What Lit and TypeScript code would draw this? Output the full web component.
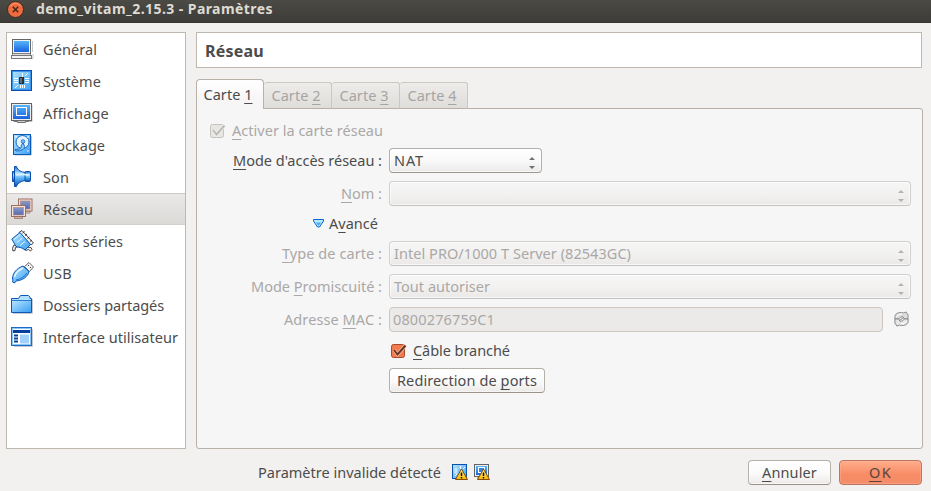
import { LitElement, html, css, svg, nothing } from "lit";
import { customElement, property, query } from "lit/decorators.js";

/** A label with an underlined mnemonic ("~" precedes the letter), tracked to a given width. */
@customElement("ui-text")
class UiText extends LitElement {
  @property() text = "";
  @property({ type: Number }) w = 0;
  @query("span") inner!: HTMLSpanElement;

  static styles = css`
    :host { display: inline-block; white-space: pre; flex: none; line-height: 20px; }
    u { text-decoration: underline; text-decoration-thickness: 1px; text-underline-offset: 3px; text-decoration-skip-ink: none; }
  `;

  updated() {
    const s = this.inner;
    s.style.letterSpacing = "0px";
    const n = this.text.replace("~", "").length;
    s.style.letterSpacing = `${(this.w - s.getBoundingClientRect().width) / n}px`;
  }

  render() {
    const i = this.text.indexOf("~");
    const t = this.text;
    if (i < 0) return html`<span>${t}</span>`;
    return html`<span>${t.slice(0, i) || nothing}<u>${t[i + 1]}</u>${t.slice(i + 2) || nothing}</span>`;
  }
}

const defs = svg`<defs>
  <linearGradient id="b" x1="0" y1="0" x2="0" y2="1"><stop offset="0" stop-color="#55b4fb"/><stop offset="1" stop-color="#1b63dd"/></linearGradient>
  <linearGradient id="l" x1="0" y1="0" x2="1" y2="1"><stop offset="0" stop-color="#b5e4ff"/><stop offset="1" stop-color="#3aa0f2"/></linearGradient>
  <linearGradient id="h" x1="0" y1="0" x2="0" y2="1"><stop offset="0" stop-color="#1a6fd0"/><stop offset=".35" stop-color="#b9e6ff"/><stop offset=".6" stop-color="#58b0f5"/><stop offset="1" stop-color="#0b4fae"/></linearGradient>
  <linearGradient id="n" x1="0" y1="0" x2="0" y2="1"><stop offset="0" stop-color="#8a9acb"/><stop offset="1" stop-color="#5468ac"/></linearGradient>
  <linearGradient id="y" x1="0" y1="0" x2="0" y2="1"><stop offset="0" stop-color="#fff2a0"/><stop offset="1" stop-color="#f5b800"/></linearGradient>
</defs>`;

const icons: Record<string, unknown> = {
  general: svg`
    <path d="M21.500 3v11M22 16v4.500H2" stroke="#c6c6c6" fill="none"/>
    <rect x="1.500" y="1.500" width="18" height="14" fill="#f1f1f1" stroke="#666"/>
    <rect x="3" y="3" width="15" height="11" fill="url(#b)"/>
    <path d="M2.500 15.500h16l2 2h-20z" fill="#dcdcdc" stroke="#777" stroke-width=".8"/>
    <rect x=".5" y="17.500" width="20" height="3" fill="#f4f4f4" stroke="#777"/>`,
  chip: svg`
    <rect x=".5" y=".5" width="20" height="20" fill="url(#l)" stroke="#0a50ae"/>
    <rect x="1.5" y="1.5" width="18" height="18" fill="none" stroke="#3c94e8"/>
    <path d="M11.500 3v4M3 8.500h4M3 10.500h4M3 12.500h4M14 8.500h4M14 10.500h4M14 12.500h4M9.500 15v3M11.500 15v3M13.500 15v3M4 18l3-3M14 6l3-3" stroke="#fff" fill="none"/>
    <rect x="8" y="7" width="5" height="7" fill="#2b3036"/><rect x="9" y="8" width="2" height="5" fill="#656b72"/>`,
  display: svg`
    <path d="M2 19.500h19V3" stroke="#c3c3c3" fill="none"/>
    <rect x=".5" y="1.500" width="20" height="17" fill="#eee" stroke="#626262"/>
    <rect x="2" y="3" width="17" height="14" fill="url(#b)"/>
    <rect x="5.500" y="5.500" width="10" height="8" fill="none" stroke="#fff"/>
    <path d="M3.500 18.500h14v1h-3v1h-8v-1h-3z" fill="#ccc" stroke="#666" stroke-width=".9"/>`,
  disk: svg`
    <path d="M20.500 2v19H4" stroke="#c3c8d0" fill="none"/>
    <rect x="2.500" y=".5" width="17" height="20" fill="url(#l)" stroke="#0c58bb"/>
    <circle cx="11.500" cy="8" r="6.500" fill="#e3f4ff" stroke="#1768c6"/>
    <path d="M12 8.500l1.500 4c0 3-3.500 4.500-8.500 4.500l-1-1.500c5 0 7-1.500 6-3.500z" fill="#8fcaf8" stroke="#1768c6"/>
    <circle cx="12" cy="7.500" r="1.800" fill="#7dbff5" stroke="#1768c6" stroke-width=".8"/>
    <circle cx="17" cy="17" r=".8" fill="#fff"/><path d="M16 3h2M4 3h2" stroke="#fff"/>`,
  sound: svg`
    <path d="M1.500 5.500h3v10h-3z" fill="url(#h)" stroke="#0b4fae"/>
    <path d="M3.500 .5h2c1 4 5 5.500 9 6v8c-4 .5-8 2.500-9 6h-2z" fill="url(#h)" stroke="#0b4fae"/>
    <rect x="14" y="5.500" width="5.500" height="10" rx="1" fill="url(#h)" stroke="#0b4fae"/>
    <path d="M5 9c4-.5 10-.5 13 0" stroke="#dbf3ff" fill="none" stroke-width="1.500"/>`,
  network: svg`
    <rect x="7.500" y="1" width="13.500" height="12" fill="#f4ded6" stroke="#9b6f61"/>
    <rect x="9.500" y="3" width="9.500" height="8" fill="url(#n)" stroke="#b08a80" stroke-width=".7"/>
    <path d="M13 13.500h6v1.500h-6z" fill="#eadad4" stroke="#9b6f61" stroke-width=".8"/>
    <rect x=".5" y="7.500" width="14" height="11" fill="#f6e2da" stroke="#9b6f61"/>
    <rect x="2.500" y="9.500" width="10" height="7.500" fill="url(#n)" stroke="#b08a80" stroke-width=".7"/>
    <path d="M3.500 19h8v1.500h-8z" fill="#f3e1da" stroke="#9b6f61" stroke-width=".8"/>`,
  serial: svg`
    <path d="M1.500 18.500l1-3 4-1 1 2-3 1-.5 3-2 .5zM13 19l2-2 5 .5 1 2-1.500 1.500-2-1.500-3 1z" fill="#eee" stroke="#333" stroke-width=".9"/>
    <path d="M8 2.500L11 .5 22.500 13l-2.500 2z" fill="#f4f4f4" stroke="#333" stroke-width=".9"/>
    <path d="M11.500 3l2-1.500M14 5.500l2-1.500M16.500 8.500l2-1.500M19 11.500l2-1.500" stroke="#333"/>
    <path d="M.8 9L9 2.500l10.500 12L14 20l-3-2-6-1.500z" fill="url(#l)" stroke="#0b55b5" stroke-linejoin="round"/>
    <path d="M3 9.500l6-5M6 12.500l5.500-4.500M9 15.500l5-4" fill="none" stroke="#dff4ff"/>`,
  usb: svg`
    <path d="M13.500 4.500l4.500-4L22.500 5l-4 4.500z" fill="#f4f4f4" stroke="#666"/>
    <path d="M17 3l1 1M19 5l1 1" stroke="#333"/>
    <path d="M1.500 17c0-6 4-10.500 10.500-13l6 5.500C17 15 11 18.500 5 19l-1.500 2-2-1 .5-2z" fill="url(#l)" stroke="#0b55b5"/>
    <path d="M3.500 15c1-4 4-7 8.500-9" stroke="#e4f6ff" fill="none" stroke-width="1.500"/>
    <path d="M5 18c5-1 9-4 11-7" stroke="#1d73d3" fill="none"/>`,
  folder: svg`
    <path d="M21.500 5v14.500H2" stroke="#c5cad2" fill="none"/>
    <path d="M.5 4.500h7l2-3h8l1.500 1.500v1.500h1.500v14H.5z" fill="#b2e0ff" stroke="#0d58b8"/>
    <rect x="1" y="7" width="19" height="11" fill="url(#l)"/>
    <path d="M1 6.500h19" stroke="#2878cf"/>`,
  window: svg`
    <path d="M21.500 3v17.500H3" stroke="#c5cad2" fill="none"/>
    <rect x=".5" y="1.500" width="20" height="18" fill="#fff" stroke="#1c69c8"/>
    <rect x="1.500" y="2.500" width="18" height="16" fill="none" stroke="#8dc4f6"/>
    <rect x="2" y="4" width="17" height="3" fill="#063f9b"/>
    <path d="M3 9.500h4M3 12.500h4M3 15.500h4" stroke="#063f9b" stroke-width="2"/>
    <rect x="9" y="8.500" width="9" height="9" fill="#a3cffc"/>`,
  chipSmall: svg`
    <rect x=".5" y=".5" width="14" height="14" fill="url(#l)" stroke="#0a50ae"/>
    <path d="M2.500 5h3M2.500 7h3M2.500 9h3M8.500 2v3M11 5l2-2M3 12l2-2" stroke="#fff"/>`,
  displaySmall: svg`
    <rect x=".5" y=".5" width="14" height="12" fill="#eee" stroke="#626262"/>
    <rect x="2" y="2" width="11" height="9" fill="url(#b)"/>
    <rect x="4.500" y="3.500" width="6" height="5" fill="#2d83e6" stroke="#fff"/>
    <path d="M3 14h7" stroke="#777"/>`,
};

const icon = (name: string) => html`<svg class="icon" viewBox="0 0 22 22">${defs}${icons[name]}</svg>`;
const warnIcon = (name: string) => html`<svg class="warn" viewBox="0 0 16 16">${defs}
  ${icons[name]}
  <path d="M9.500 5L15.500 15.500h-12z" fill="url(#y)" stroke="#8a4c00" stroke-linejoin="round"/>
  <path d="M9.500 8.500v3.500M9.500 13v1.500" stroke="#111" stroke-width="1.500"/></svg>`;

const arrows = html`<svg class="arrows" viewBox="0 0 6 12"><path d="M0 3h6L3 0zM0 9h6l-3 3z" fill="currentColor"/></svg>`;

const check = html`<svg class="tick" viewBox="0 0 17 16">
  <rect class="box" x="1.500" y="1.500" width="13" height="13" rx="2"/>
  <path class="halo" d="M4 7l3.500 4.500L15.500 2.500"/>
  <path class="mark" d="M4 7l3.500 4.500L15.500 2.500"/></svg>`;

const refresh = html`<svg class="refresh" viewBox="0 0 16 16">
  <path d="M1 8V4.500C2 2 4.500 1 8 1l2 .5 3-1 .5 1.500 1.500 1v5h-4L9.500 5.500 7 6 5 8z" fill="#dcdcdc" stroke="#8b8b8b"/>
  <path d="M15 8v3.500C14 14 11.500 15 8 15l-2-.5-3 1-.5-1.500L1 13V8h4l1.500 2.500L9 10l2-2z" fill="#e6e6e6" stroke="#828282"/>
  <path d="M2.500 6c1-2 3-3.500 6-3M13.500 10c-1 2-3 3.500-6 3" stroke="#fff" fill="none"/>
  <path d="M6 9.500l4-3" stroke="#777" fill="none"/></svg>`;

const t = (text: string, w: number) => html`<ui-text .text=${text} .w=${w}></ui-text>`;

const pages: [string, string, number][] = [
  ["general", "Général", 54], ["chip", "Système", 58], ["display", "Affichage", 66],
  ["disk", "Stockage", 62], ["sound", "Son", 26], ["network", "Réseau", 50],
  ["serial", "Ports séries", 80], ["usb", "USB", 29], ["folder", "Dossiers partagés", 121],
  ["window", "Interface utilisateur", 135],
];

@customElement("app-root")
class AppRoot extends LitElement {
  static styles = css`
    :host {
      display: flex; flex-direction: column; width: 931px; height: 491px; overflow: hidden;
      background: #f2f1f0; color: #4c4c4c; box-sizing: border-box;
      font: 14.5px/20px "Noto Sans", "Open Sans", sans-serif;
    }
    * { box-sizing: border-box; }
    svg { display: block; flex: none; overflow: visible; }
    .titlebar {
      height: 23px; flex: none; display: flex; align-items: center; padding: 0 0 4px 7px; gap: 12px;
      background: linear-gradient(#4b4a45, #3d3c38); border-bottom: 1px solid #37362f;
      color: #dfdbd2; font-weight: 700; font-size: 14px;
    }
    .close { width: 17px; height: 17px; }
    .body { display: flex; gap: 10px; padding: 9px 8px 0 6px; height: 426px; flex: none; }
    .sidebar { width: 180px; height: 417px; border: 1px solid #bfb8b1; background: #fff; }
    .item { height: 32px; display: flex; align-items: center; gap: 10px; padding-left: 4px; }
    .item.on { background: linear-gradient(#eae9e7, #dcdad7); border-top: 1px solid #cdcac6; border-bottom: 1px solid #d4d1cd; }
    .row ui-text, .btn ui-text { margin-bottom: 2px; }
    .icon { width: 22px; height: 22px; }
    .main { width: 727px; display: flex; flex-direction: column; }
    .heading {
      width: 726px; height: 36px; border: 1px solid #bfb8b1; background: #fff; padding: 1px 0 0 8px;
      display: flex; align-items: center; font-weight: 700; font-size: 16px; flex: none;
    }
    .tabs { display: flex; align-items: flex-end; height: 30px; margin: 11px 0 -1px; flex: none; z-index: 1; }
    .tab {
      width: 68px; height: 27px; border: 1px solid #cbc7c2; border-left: none; border-bottom-color: #b7b1aa;
      border-radius: 3px 3px 0 0; background: linear-gradient(#edecea, #dfddda);
      color: #a7a5a2; padding: 2px 0 0 7.5px;
    }
    .tab.on { height: 30px; border: 1px solid #b7b1aa; border-bottom: none; background: linear-gradient(#fff, #f6f6f6 70%); color: #4c4c4c; padding: 4px 0 0 6.5px; border-radius: 4px 4px 0 0; }
    .panel { flex: 1; background: #f6f6f6; border: 1px solid #b7b1aa; border-radius: 0 3px 3px 3px; padding-top: 9px; }
    .row { display: flex; align-items: center; gap: 7px; }
    .label { width: 185px; display: flex; justify-content: flex-end; align-items: center; flex: none; }
    .off { color: #aaa8a6; }
    .h26 { height: 26px; } .h28 { height: 28px; } .h30 { height: 30px; } .h32 { height: 32px; } .h34 { height: 34px; }
    .field {
      height: 25px; margin-bottom: 1px; border: 1px solid #b3afaa; border-bottom-color: #9b968f; border-radius: 4px;
      display: flex; align-items: center; justify-content: space-between; padding: 0 6px 0 4px;
      background: linear-gradient(#fff, #f9f9f9 50%, #eceae8); box-shadow: inset 0 0 0 1px #ffffffa0;
    }
    .field.empty { justify-content: flex-end; }
    .field.off { border-color: #d2cfcc; border-bottom-color: #c4c1be; background: linear-gradient(#f6f6f6, #f2f1f0 55%, #eae9e7); }
    .field.off .arrows { color: #b4b2b0; }
    .wide { width: 522px; }
    .nat { width: 153px; }
    .mac.off { width: 494px; background: #ebeae8; border-color: #cdc7c0; box-shadow: none; padding-left: 3px; }
    .arrows { width: 6px; height: 12px; position: relative; top: 2px; color: #72706e; }
    .refresh { width: 15px; height: 16px; margin: 0 0 3px 4px; }
    .tick { width: 17px; height: 16px; fill: none; stroke-width: 2; margin-bottom: 1px; }
    .box { fill: #f17a4e; stroke: #a9492c; stroke-width: 1; }
    .mark { stroke: #653524; }
    .halo { stroke: #ffbc9b; stroke-width: 3.500; }
    .off .box { fill: #e7e6e4; stroke: #c6c2bd; }
    .off .mark { stroke: #bcb9b6; }
    .off .halo { stroke: #f2f1f0; }
    .activate { padding-left: 12px; gap: 6px; }
    .advanced { padding-left: 116px; gap: 5px; }
    .cable { padding-left: 193px; gap: 6px; }
    .forward { padding-left: 192px; }
    .btn {
      height: 25px; display: flex; align-items: center; justify-content: center; border-radius: 4px;
      border: 1px solid #b5b0aa; border-bottom-color: #99938c; background: linear-gradient(#fff, #fafafa 55%, #eceae8);
      box-shadow: inset 0 0 0 1px #ffffff90;
    }
    .forward .btn { width: 156px; margin-bottom: 1px; }
    .footer { display: flex; align-items: center; padding: 4px 9px 0 258px; height: 42px; box-sizing: border-box; }
    .footer .btn ui-text { margin-bottom: 0; }
    .alerts { display: flex; gap: 6px; margin-left: 11px; }
    .warn { width: 16px; height: 16px; }
    .footer .btn { width: 83px; margin-left: 8px; }
    .footer .cancel { margin-left: auto; }
    .footer .ok { border-color: #ba765e; background: linear-gradient(#ffad8b, #f78b65 60%, #f38d69); box-shadow: inset 0 0 0 1px #ffc2a950; color: #5a443c; }
  `;

  combo(label: string, w: number, height: string, value: string, vw: number) {
    return html`<div class="row off ${height}">
      <div class="label">${t(label, w)}</div>
      <div class="field off wide ${value ? "" : "empty"}">${value ? t(value, vw) : nothing}${arrows}</div>
    </div>`;
  }

  render() {
    return html`
      <div class="titlebar">
        <svg class="close" viewBox="0 0 17 17">
          <circle cx="8.500" cy="8.500" r="8" fill="#ef6a3d" stroke="#302d28"/>
          <path d="M3 5.500a6.500 6.500 0 0 1 11 0" stroke="#ff9d72" fill="none"/>
          <path d="M5.800 5.800l5.400 5.400M11.200 5.800l-5.400 5.400" stroke="#3e2a22" stroke-width="1.500"/>
        </svg>
        ${t("demo_vitam_2.15.3 - Paramètres", 237)}
      </div>
      <div class="body">
        <div class="sidebar">
          ${pages.map(([i, name, w]) => html`<div class="item ${name === "Réseau" ? "on" : ""}">${icon(i)}${t(name, w)}</div>`)}
        </div>
        <div class="main">
          <div class="heading">${t("Réseau", 59)}</div>
          <div class="tabs">
            ${[1, 2, 3, 4].map((n) => html`<div class="tab ${n === 1 ? "on" : ""}">${t("Carte ~" + n, 49)}</div>`)}
          </div>
          <div class="panel">
            <div class="row h26 off activate">${check}${t("~Activer la carte réseau", 151)}</div>
            <div class="row h34">
              <div class="label">${t("~Mode d'accès réseau :", 149)}</div>
              <div class="field nat">${t("NAT", 30)}${arrows}</div>
            </div>
            ${this.combo("~Nom :", 41, "h32", "", 0)}
            <div class="row h28 advanced">
              <svg width="11" height="10" viewBox="0 0 11 10"><path d="M.5 .5h10v1.500L6.500 8h-2L.5 2z" fill="#b9e9ff" stroke="#0763cf"/><path d="M3 3.500h5l-2 3H5z" fill="#49aaf5"/></svg>
              ${t("A~vancé", 49)}
            </div>
            ${this.combo("~Type de carte :", 100, "h32", "Intel PRO/1000 T Server (82543GC)", 237)}
            ${this.combo("Mode ~Promiscuité :", 131, "h34", "Tout autoriser", 96)}
            <div class="row off h32">
              <div class="label">${t("Adresse ~MAC :", 98)}</div>
              <div class="field off mac">${t("0800276759C1", 102)}</div>
              ${refresh}
            </div>
            <div class="row h30 cable">${check}${t("~Câble branché", 97)}</div>
            <div class="row h30 forward"><div class="btn">${t("Redirection de ~ports", 140)}</div></div>
          </div>
        </div>
      </div>
      <div class="footer">
        ${t("Paramètre invalide détecté", 183)}
        <div class="alerts">${warnIcon("chipSmall")}${warnIcon("displaySmall")}</div>
        <div class="btn cancel">${t("~Annuler", 55)}</div>
        <div class="btn ok">${t("~OK", 23)}</div>
      </div>`;
  }
}
